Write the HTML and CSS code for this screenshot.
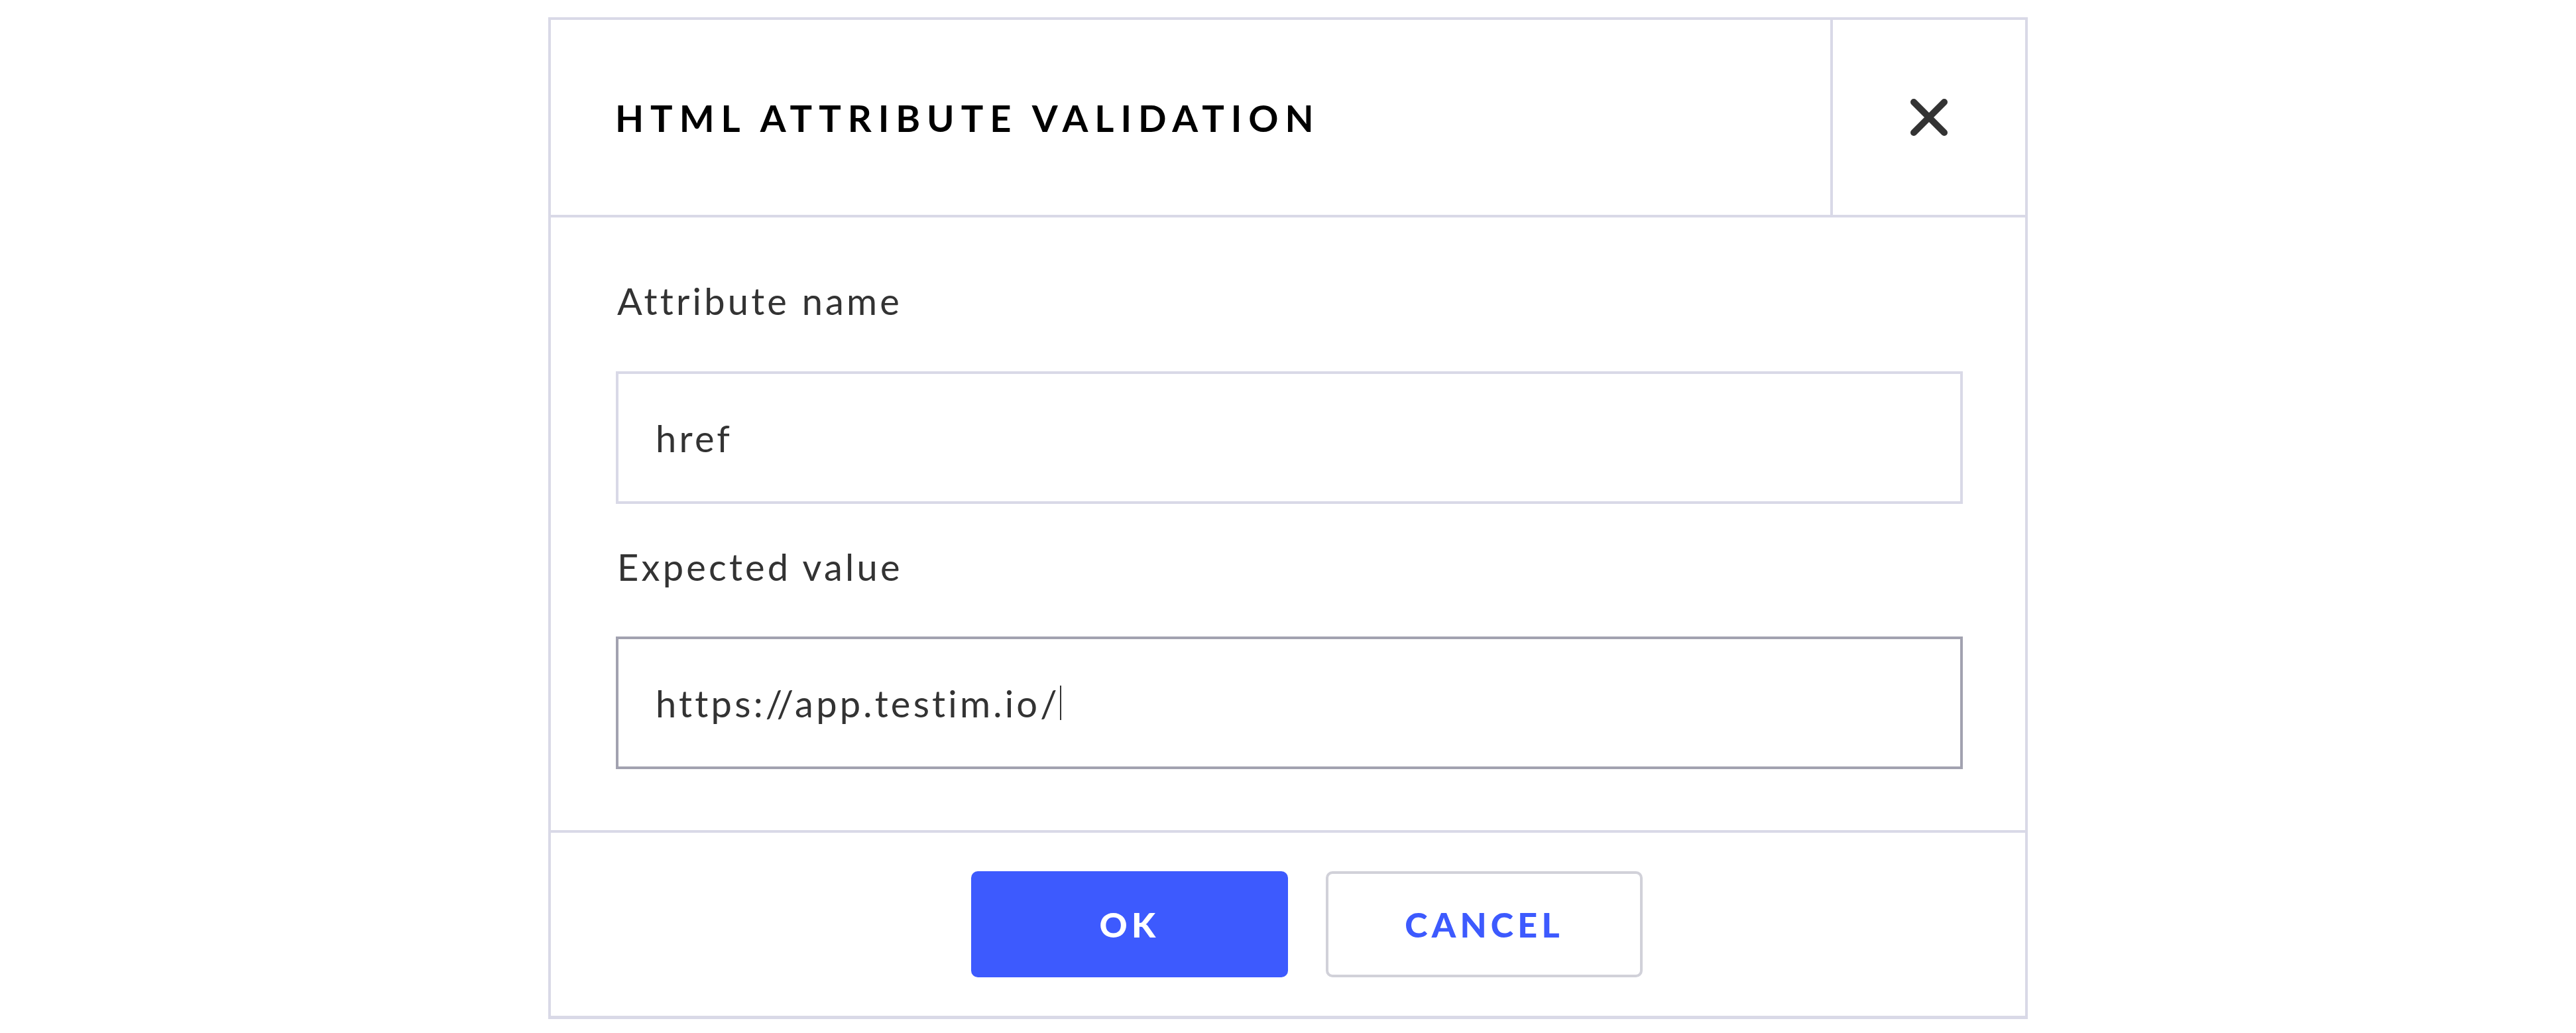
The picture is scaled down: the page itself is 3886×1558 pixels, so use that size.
FILE: index.html
```html
<!DOCTYPE html>
<html lang="en">
<head>
<meta charset="utf-8">
<title>HTML Attribute Validation</title>
<link rel="stylesheet" href="styles.css">
</head>
<body>
<div class="page">
  <div class="dialog">
    <div class="header">
      <div class="title">HTML ATTRIBUTE VALIDATION</div>
      <div class="close">
        <svg viewBox="0 0 60 60" width="60" height="60" aria-hidden="true">
          <path d="M7 7 L53 53 M53 7 L7 53" stroke="#333333" stroke-width="10" stroke-linecap="round" fill="none"/>
        </svg>
      </div>
    </div>
    <div class="body">
      <div class="label">Attribute name</div>
      <div class="field">href</div>
      <div class="label">Expected value</div>
      <div class="field focused">https://app.testim.io/<span class="caret"></span></div>
    </div>
    <div class="footer">
      <button class="btn primary">OK</button>
      <button class="btn secondary">CANCEL</button>
    </div>
  </div>
</div>
</body>
</html>
```
FILE: styles.css
```css
html, body {
  margin: 0;
  padding: 0;
  background: #ffffff;
}

.page {
  display: flex;
  justify-content: center;
  padding-top: 26px;
  font-family: Lato, "Noto Sans", sans-serif;
}

.dialog {
  width: 2232px;
  box-sizing: border-box;
  border: 4px solid #d9d9e7;
  border-bottom-width: 5px;
  background: #ffffff;
}

.header {
  display: flex;
  height: 294px;
  border-bottom: 4px solid #d9d9e7;
}

.title {
  flex: 1;
  display: flex;
  align-items: center;
  padding-left: 97px;
  font-size: 56px;
  font-weight: 700;
  letter-spacing: 0.178em;
  color: #000000;
}

.close {
  width: 290px;
  border-left: 4px solid #d9d9e7;
  display: flex;
  align-items: center;
  justify-content: center;
}

.body {
  padding: 0 94px 92px 98px;
  display: flex;
  flex-direction: column;
}

.label {
  font-size: 56px;
  line-height: 80px;
  color: #333333;
  letter-spacing: 0.075em;
  padding-left: 2px;
  margin-top: 86px;
  margin-bottom: 66px;
}

.label + .field + .label {
  margin-top: 55px;
  margin-bottom: 65px;
}

.field {
  height: 200px;
  box-sizing: border-box;
  border: 4px solid #d9d9e7;
  display: flex;
  align-items: center;
  padding-left: 56px;
  font-size: 56px;
  color: #333333;
  letter-spacing: 0.075em;
}

.field.focused {
  border-color: #a2a2b0;
}

.caret {
  display: inline-block;
  width: 2px;
  height: 52px;
  background: #333333;
  margin-left: 0;
}

.footer {
  height: 276px;
  border-top: 4px solid #d9d9e7;
  display: flex;
  justify-content: center;
  align-items: center;
}

.btn {
  width: 478px;
  height: 160px;
  margin: 0 0 0 57px;
  box-sizing: border-box;
  border-radius: 10px;
  font-family: Lato, "Noto Sans", sans-serif;
  font-size: 52px;
  font-weight: 900;
  letter-spacing: 0.12em;
  padding: 0;
  cursor: pointer;
}

.btn.primary {
  background: #3d5afe;
  border: none;
  color: #ffffff;
}

.btn.secondary {
  background: #ffffff;
  border: 4px solid #d1d1d9;
  color: #3d5afe;
}
```
